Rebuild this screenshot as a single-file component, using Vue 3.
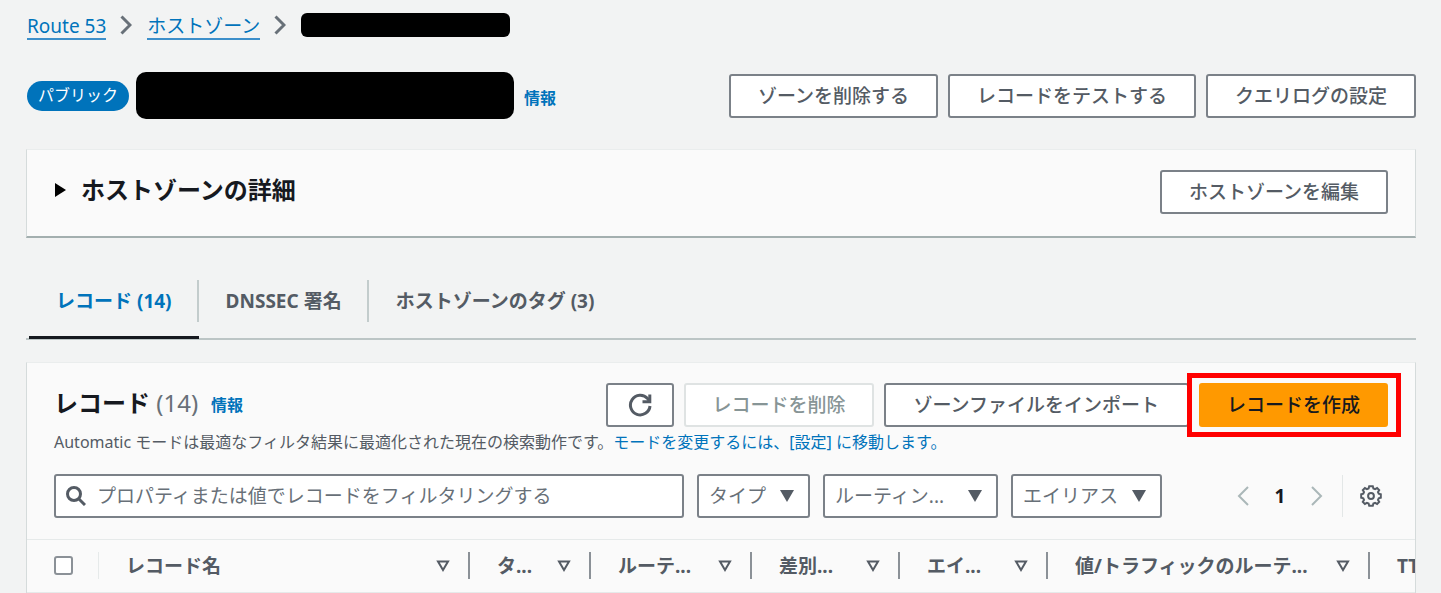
<script setup>
import { ref } from 'vue'

const query = ref('')
const zoneActions = ['ゾーンを削除する', 'レコードをテストする', 'クエリログの設定']
const tabs = ['レコード (14)', 'DNSSEC 署名', 'ホストゾーンのタグ (3)']
const activeTab = ref(0)
const filters = [
  { label: 'タイプ', size: 'small' },
  { label: 'ルーティン...', size: 'large' },
  { label: 'エイリアス', size: 'medium' },
]
const columns = [
  { label: 'レコード名', name: 'name' },
  { label: 'タ...', name: 'type' },
  { label: 'ルーテ...', name: 'routing' },
  { label: '差別...', name: 'differ' },
  { label: 'エイ...', name: 'alias' },
  { label: '値/トラフィックのルーテ...', name: 'value' },
  { label: 'TTL (秒)', name: 'ttl' },
]
</script>

<template>
  <main class="page">
    <nav class="breadcrumbs" aria-label="パンくずリスト">
      <a href="#">Route 53</a>
      <svg class="crumb-arrow" viewBox="0 0 12 20"><path d="M1.5 1.5 L10 10 L1.5 18.5" /></svg>
      <a href="#">ホストゾーン</a>
      <svg class="crumb-arrow" viewBox="0 0 12 20"><path d="M1.5 1.5 L10 10 L1.5 18.5" /></svg>
      <span class="crumb-redacted"></span>
    </nav>

    <header class="zone-header">
      <span class="badge">パブリック</span>
      <h1 class="zone-redacted"></h1>
      <a class="info" href="#">情報</a>
      <div class="zone-actions">
        <button v-for="a in zoneActions" :key="a" class="btn" type="button">{{ a }}</button>
      </div>
    </header>

    <section class="panel details">
      <button class="expander" type="button" aria-expanded="false">
        <svg class="caret" viewBox="0 0 11 14"><path d="M0 0 L11 7 L0 14 Z" /></svg>
        ホストゾーンの詳細
      </button>
      <button class="btn" type="button">ホストゾーンを編集</button>
    </section>

    <div class="tabs" role="tablist">
      <button
        v-for="(t, i) in tabs"
        :key="t"
        class="tab"
        :class="{ active: i === activeTab }"
        type="button"
        role="tab"
        :aria-selected="i === activeTab"
        @click="activeTab = i"
      >
        <span class="tab-label">{{ t }}</span>
      </button>
    </div>

    <section class="panel records">
      <div class="records-header">
        <h2>レコード <span class="count">(14)</span></h2>
        <a class="info" href="#">情報</a>
        <div class="record-actions">
          <button class="btn refresh" type="button" aria-label="更新">
            <svg viewBox="0 0 24 24">
              <path d="M22 13 A9.8 9.8 0 1 1 19.6 5.6 L21.5 8" />
              <path d="M21.8 1.5 V8.800 H14.500" />
            </svg>
          </button>
          <button class="btn" type="button" disabled>レコードを削除</button>
          <button class="btn import" type="button">ゾーンファイルをインポート</button>
          <div class="highlighted">
            <button class="btn primary" type="button">レコードを作成</button>
          </div>
        </div>
      </div>

      <p class="description">
        Automatic モードは最適なフィルタ結果に最適化された現在の検索動作です。<a href="#">モードを変更するには、[設定] に移動します。</a>
      </p>

      <div class="toolbar">
        <label class="search">
          <svg viewBox="0 0 20 20">
            <circle cx="8" cy="8" r="6.5" />
            <path d="M12.7 12.7 L19 19" />
          </svg>
          <input v-model="query" type="text" aria-label="レコードをフィルタリング" placeholder="プロパティまたは値でレコードをフィルタリングする" />
        </label>
        <div v-for="f in filters" :key="f.label" class="filter" :class="f.size">
          <select :aria-label="f.label">
            <option>{{ f.label }}</option>
          </select>
          <svg viewBox="0 0 14 12"><path d="M0 0 H14 L7 12 Z" /></svg>
        </div>
        <div class="pager">
          <button class="icon-btn arrow" type="button" aria-label="前のページ">
            <svg viewBox="0 0 12 20"><path d="M11 1 L2 10 L11 19" /></svg>
          </button>
          <button class="icon-btn page-number" type="button">1</button>
          <button class="icon-btn arrow" type="button" aria-label="次のページ">
            <svg viewBox="0 0 12 20"><path d="M1 1 L10 10 L1 19" /></svg>
          </button>
          <span class="divider"></span>
          <button class="icon-btn gear" type="button" aria-label="設定">
            <svg viewBox="0 0 22 22">
              <path d="M9.2 1.2 H12.8 L13.4 3.4 L15.1 4.1 L17.1 3 L19.2 5.1 L18 7 L18.7 8.7 L20.8 9.200 V12.8 L18.7 13.3 L18 15 L19.2 16.9 L17.100 19 L15.1 17.9 L13.4 18.6 L12.8 20.8 H9.2 L8.6 18.6 L6.9 17.9 L4.9 19 L2.8 16.9 L4 15 L3.3 13.3 L1.2 12.8 V9.200 L3.3 8.7 L4 7 L2.8 5.1 L4.9 3 L6.9 4.1 L8.6 3.400 Z" />
              <circle cx="11" cy="11" r="2.9" />
            </svg>
          </button>
        </div>
      </div>

      <div class="table-wrap">
        <table>
          <colgroup>
            <col class="col-check" />
            <col v-for="c in columns" :key="c.name" :class="'col-' + c.name" />
          </colgroup>
          <thead>
            <tr>
              <th class="check"><div class="cell"><input type="checkbox" aria-label="すべて選択" /></div></th>
              <th v-for="c in columns" :key="c.name" scope="col">
                <div class="cell">
                  <span>{{ c.label }}</span>
                  <svg viewBox="0 0 14 12"><path d="M2 1.5 H12 L7 10 Z" /></svg>
                </div>
              </th>
            </tr>
          </thead>
        </table>
      </div>
    </section>
  </main>
</template>

<style>
body {
  background: #f2f3f3;
}
</style>

<style scoped>
.page {
  box-sizing: border-box;
  padding: 11px 25px 0 26px;
  font-family: "Noto Sans", "Noto Sans CJK JP", sans-serif;
  font-size: 19px;
  line-height: 28px;
  color: #16191f;
  background: #f2f3f3;
  overflow: hidden;
}
.page * {
  box-sizing: border-box;
}
button,
input,
select {
  font: inherit;
  margin: 0;
}
a {
  color: #0073bb;
  text-decoration: none;
}

.breadcrumbs {
  display: flex;
  align-items: center;
  height: 28px;
  padding-left: 1px;
}
.breadcrumbs a {
  height: 30px;
  line-height: 32px;
  border-bottom: 2px solid #3d8fca;
}
.crumb-arrow {
  width: 12px;
  height: 20px;
  margin: 0 15px 0 14px;
}
.crumb-arrow path {
  fill: none;
  stroke: #687078;
  stroke-width: 3;
}
.crumb-redacted {
  width: 209px;
  height: 24px;
  border-radius: 6px;
  background: #000;
}

.zone-header {
  display: flex;
  align-items: center;
  margin-top: 33px;
  height: 47px;
  padding-left: 1px;
}
.badge {
  height: 30px;
  padding: 0 11px;
  border-radius: 15px;
  background: #0073bb;
  color: #fff;
  font-size: 16px;
  line-height: 28px;
}
.zone-redacted {
  width: 378px;
  height: 47px;
  margin: 0 10px 0 7px;
  border-radius: 10px;
  background: #000;
}
.info {
  font-size: 16px;
  font-weight: 700;
}
.zone-header .info {
  padding-top: 4px;
}
.zone-actions {
  display: flex;
  gap: 10px;
  margin-left: auto;
}

.btn {
  height: 44px;
  padding: 0 26px;
  border: 2px solid #7b8188;
  border-radius: 3px;
  background: #fff;
  color: #545b64;
  font-weight: 500;
  line-height: 28px;
  white-space: nowrap;
}
.zone-actions .btn,
.details .btn {
  padding: 0 27px;
}
.btn:disabled {
  border-color: #dfe3e3;
  color: #879596;
}
.btn.primary {
  border-color: #ff9900;
  background: #ff9900;
  color: #16191f;
}

.panel {
  background: #fafafa;
  border: 1px solid #d5dbdb;
  border-top-color: #eaeded;
}
.details {
  display: flex;
  align-items: center;
  justify-content: space-between;
  margin-top: 30px;
  height: 89px;
  padding: 0 27px 2px;
  border-bottom: 2px solid #a3afaf;
}
.expander {
  display: flex;
  align-items: center;
  gap: 15px;
  padding: 0 1px 4px;
  border: 0;
  background: none;
  color: #16191f;
  font-size: 24px;
  font-weight: 700;
}
.caret {
  width: 11px;
  height: 14px;
}

.tabs {
  display: flex;
  margin-top: 42px;
  height: 60px;
  padding-left: 3px;
  border-bottom: 2px solid #bcc5c5;
}
.tab {
  height: 59px;
  padding: 0;
  border: 0;
  border-bottom: 3px solid transparent;
  background: none;
  color: #545b64;
  font-weight: 700;
}
.tab-label {
  display: block;
  height: 42px;
  padding: 0 25px 0 27px;
  border-right: 2px solid #c3cccc;
  line-height: 42px;
  margin-bottom: 14px;
}
.tab:last-child .tab-label {
  border-right: 0;
}
.tab.active {
  border-bottom-color: #16191f;
  color: #0073bb;
}

.records {
  margin-top: 22px;
  border-bottom: 0;
}
.records-header {
  display: flex;
  align-items: center;
  height: 44px;
  margin-top: 20px;
  padding: 0 27px 0 27px;
}
h2 {
  margin: 0 13px 4px 0;
  font-size: 24px;
  line-height: 32px;
}
.count {
  color: #687078;
  font-weight: 400;
}
.record-actions {
  display: flex;
  align-items: center;
  gap: 10px;
  margin-left: auto;
}
.refresh {
  width: 68px;
  padding: 0 20px;
}
.refresh svg {
  display: block;
  width: 24px;
  height: 24px;
  fill: none;
  stroke: #545b64;
  stroke-width: 3;
}
.import {
  padding: 0 28px;
}
.highlighted {
  position: relative;
  display: flex;
}
.highlighted::before {
  content: "";
  position: absolute;
  inset: -10px -13px -10px -12px;
  border: 5px solid #ff0000;
  background: #fafafa;
}
.highlighted .btn {
  position: relative;
}
.description {
  margin: 3px 0 0;
  padding: 0 27px;
  font-size: 16px;
  line-height: 24px;
  color: #545b64;
  white-space: nowrap;
}

.toolbar {
  display: flex;
  align-items: center;
  gap: 13px;
  margin-top: 12px;
  padding: 8px 27px 21px;
}
.search {
  display: flex;
  align-items: center;
  flex: 1;
  gap: 11px;
  height: 44px;
  padding: 0 10px;
  border: 2px solid #7b8188;
  border-radius: 3px;
  background: #fff;
}
.search svg {
  flex: none;
  width: 20px;
  height: 20px;
  fill: none;
  stroke: #545b64;
  stroke-width: 3;
}
.search input {
  flex: 1;
  min-width: 0;
  padding: 0;
  border: 0;
  outline: 0;
  background: none;
}
.search input::placeholder {
  color: #687078;
  opacity: 1;
}
.filter {
  display: grid;
  align-items: center;
  height: 44px;
}
.filter.small {
  width: 113px;
}
.filter.medium {
  width: 151px;
}
.filter.large {
  width: 175px;
}
.filter select {
  grid-area: 1 / 1;
  width: 100%;
  height: 44px;
  padding: 0 10px;
  border: 2px solid #7b8188;
  border-radius: 3px;
  appearance: none;
  background: #fff;
  color: #687078;
}
.filter svg {
  grid-area: 1 / 1;
  justify-self: end;
  width: 14px;
  height: 12px;
  margin-right: 16px;
  fill: #545b64;
  pointer-events: none;
}
.pager {
  display: flex;
  align-items: center;
  margin-left: 62px;
}
.icon-btn {
  display: block;
  padding: 0;
  border: 0;
  background: none;
  color: #16191f;
}
.icon-btn svg {
  display: block;
  width: 100%;
  fill: none;
}
.arrow {
  width: 12px;
}
.arrow svg {
  stroke: #aab7b8;
  stroke-width: 2;
}
.page-number {
  width: 62px;
  font-weight: 700;
}
.divider {
  width: 1px;
  height: 42px;
  margin: 0 17px 0 19px;
  background: #e3e7e7;
}
.gear {
  width: 22px;
  margin-right: 6px;
}
.gear svg {
  stroke: #545b64;
  stroke-width: 2;
}

.table-wrap {
  overflow: hidden;
  border-top: 1px solid #e6eaea;
}
table {
  width: 1500px;
  table-layout: fixed;
  border-collapse: collapse;
}
.col-check { width: 72px; }
.col-name { width: 371px; }
.col-type { width: 121px; }
.col-routing { width: 161px; }
.col-differ { width: 148px; }
.col-alias { width: 148px; }
.col-value { width: 322px; }
th {
  height: 52px;
  padding: 0;
  border-bottom: 1px solid #e6eaea;
  color: #545b64;
  font-weight: 700;
  text-align: left;
  white-space: nowrap;
}
.cell {
  display: flex;
  align-items: center;
  justify-content: space-between;
  height: 27px;
  padding: 0 18px 0 27px;
  border-right: 2px solid #8b9197;
}
.check .cell {
  border-right: 1px solid #e6eaea;
}
.cell svg {
  flex: none;
  width: 14px;
  height: 12px;
  fill: none;
  stroke: #545b64;
  stroke-width: 2;
}
.cell input {
  appearance: none;
  width: 19px;
  height: 19px;
  border: 2px solid #8b9197;
  border-radius: 3px;
  background: #fff;
}
</style>
